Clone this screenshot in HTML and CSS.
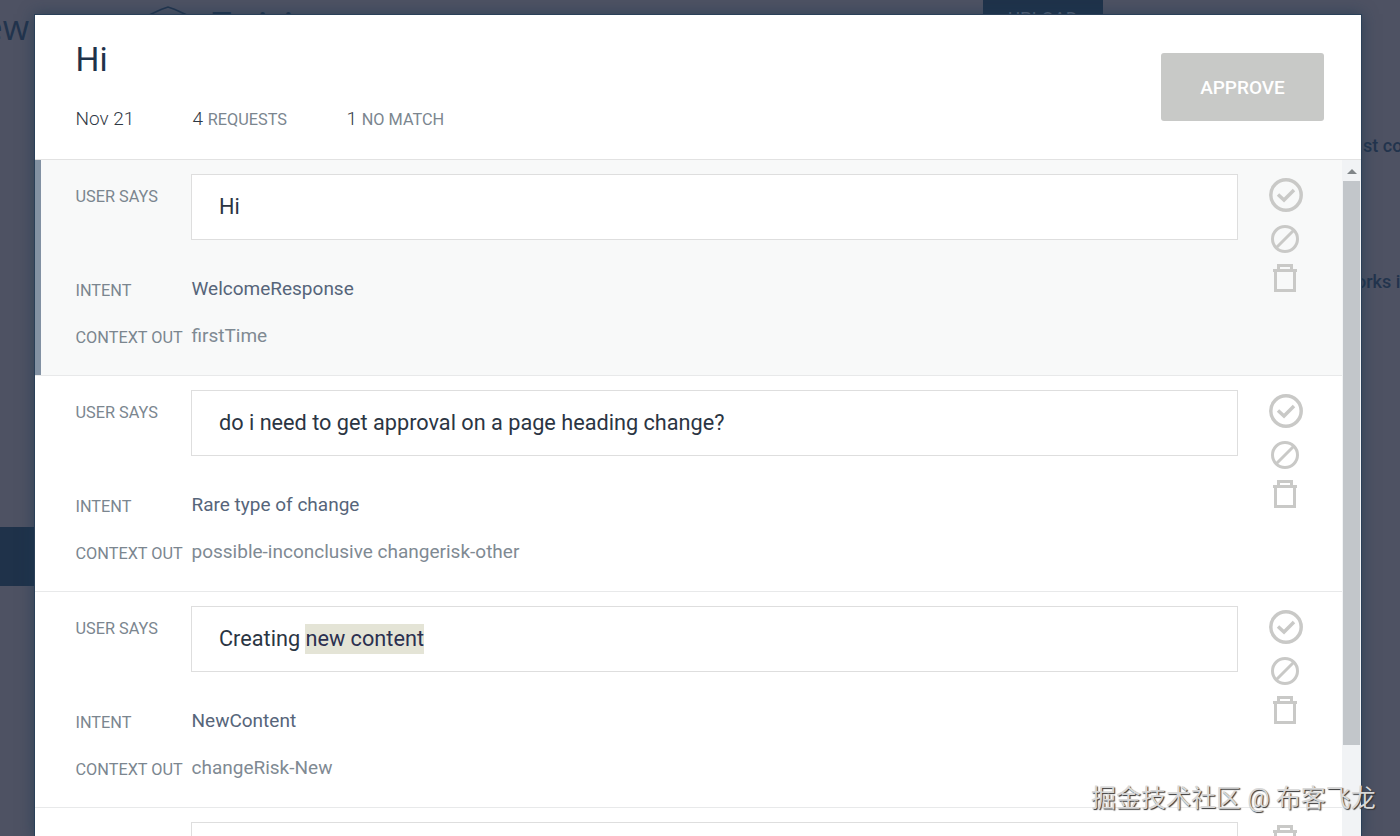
FILE: index.html
```html
<!DOCTYPE html>
<html lang="en">
<head>
    <meta charset="UTF-8">
    <meta name="viewport" content="width=device-width, initial-scale=1.0">
    <title>Training</title>
    <link rel="stylesheet" href="styles.css">
</head>
<body>
    <svg class="sprite" width="0" height="0">
        <symbol id="icon-check" viewBox="0 0 34 34">
            <circle cx="17" cy="17" r="15.2" />
            <path d="M9 16.500l6 5.500 10-10" />
        </symbol>
        <symbol id="icon-block" viewBox="0 0 28 28">
            <circle cx="14" cy="14" r="12.5" />
            <path d="M5.500 22.500L22.500 5.500" />
        </symbol>
        <symbol id="icon-trash" viewBox="0 0 26 30">
            <path d="M1 7.500h24M6.500 6.500V2.500h13v4M3.500 8v19.500h19V8" />
        </symbol>
    </svg>

    <!-- page behind the dialog -->
    <div class="page">
        <div class="page-logo">ew</div>
        <svg class="page-icon" width="48" height="24" viewBox="0 0 48 24">
            <path d="M3 16L17 9.500 24 7l7 2.500L45 16" />
        </svg>
        <div class="page-title">Training</div>
        <div class="page-upload">UPLOAD</div>
        <div class="page-active"></div>
        <div class="page-hint hint-top">st co</div>
        <div class="page-hint hint-bottom">orks i</div>
    </div>

    <div class="modal">
        <div class="modal-header">
            <div class="summary">
                <h1 class="title">Hi</h1>
                <div class="stats">
                    <span class="stat date">Nov 21</span>
                    <span class="stat requests">4 <small>REQUESTS</small></span>
                    <span class="stat">1 <small>NO MATCH</small></span>
                </div>
            </div>
            <button class="btn-approve">APPROVE</button>
        </div>

        <div class="modal-body">
            <div class="list">
                <div class="item active">
                    <div class="label">USER SAYS</div>
                    <div class="phrase"><span>Hi</span></div>
                    <div class="actions">
                        <svg class="icon check"><use href="#icon-check" /></svg>
                        <svg class="icon block"><use href="#icon-block" /></svg>
                        <svg class="icon trash"><use href="#icon-trash" /></svg>
                    </div>
                    <div class="label">INTENT</div>
                    <div class="value intent">WelcomeResponse</div>
                    <div class="label">CONTEXT OUT</div>
                    <div class="value">firstTime</div>
                </div>

                <div class="item">
                    <div class="label">USER SAYS</div>
                    <div class="phrase"><span>do i need to get approval on a page heading change?</span></div>
                    <div class="actions">
                        <svg class="icon check"><use href="#icon-check" /></svg>
                        <svg class="icon block"><use href="#icon-block" /></svg>
                        <svg class="icon trash"><use href="#icon-trash" /></svg>
                    </div>
                    <div class="label">INTENT</div>
                    <div class="value intent">Rare type of change</div>
                    <div class="label">CONTEXT OUT</div>
                    <div class="value">possible-inconclusive changerisk-other</div>
                </div>

                <div class="item">
                    <div class="label">USER SAYS</div>
                    <div class="phrase"><span>Creating <mark>new content</mark></span></div>
                    <div class="actions">
                        <svg class="icon check"><use href="#icon-check" /></svg>
                        <svg class="icon block"><use href="#icon-block" /></svg>
                        <svg class="icon trash"><use href="#icon-trash" /></svg>
                    </div>
                    <div class="label">INTENT</div>
                    <div class="value intent">NewContent</div>
                    <div class="label">CONTEXT OUT</div>
                    <div class="value">changeRisk-New</div>
                </div>

                <div class="item">
                    <div class="label"></div>
                    <div class="phrase"></div>
                    <div class="actions single">
                        <svg class="icon trash"><use href="#icon-trash" /></svg>
                    </div>
                </div>
            </div>
            <div class="scrollbar">
                <div class="scroll-arrow"></div>
                <div class="scroll-thumb"></div>
            </div>
        </div>
    </div>

    <div class="watermark">掘金技术社区 @ 布客飞龙</div>
</body>
</html>
```

FILE: styles.css
```css
* {
    box-sizing: border-box;
}

body {
    margin: 0;
    height: 836px;
    overflow: hidden;
    position: relative;
    background: #4e5263;
    font-family: Roboto, "Noto Sans CJK SC", sans-serif;
}

.sprite {
    position: absolute;
}

/* page behind the dialog */
.page {
    position: absolute;
    inset: 0;
    overflow: hidden;
    color: #22344d;
}

.page > * {
    position: absolute;
}

.page-logo {
    right: 1371px;
    top: 9px;
    font-family: "Open Sans", sans-serif;
    font-size: 34px;
    line-height: 36px;
    font-weight: 500;
}

.page-icon {
    left: 144px;
    top: 0;
    fill: none;
    stroke: #22344d;
    stroke-width: 1.5;
}

.page-title {
    left: 212px;
    top: 4px;
    font-size: 32px;
    line-height: 38px;
    font-weight: 500;
}

.page-upload {
    left: 983px;
    top: 0;
    width: 120px;
    height: 40px;
    padding-top: 8px;
    background: #1f324a;
    color: #59647a;
    font-size: 18.500px;
    text-align: center;
}

.page-active {
    left: 0;
    top: 527px;
    width: 40px;
    height: 59px;
    background: #1f324a;
}

.page-hint {
    font-size: 18px;
    line-height: 22px;
    font-weight: 500;
    white-space: nowrap;
}

.hint-top {
    left: 1363px;
    top: 135px;
}

.hint-bottom {
    left: 1356px;
    top: 271px;
}

/* dialog */
.modal {
    position: absolute;
    left: 35px;
    top: 15px;
    width: 1326px;
    height: 821px;
    overflow: hidden;
    background: #fff;
    box-shadow: 0 0 0 1px #2a4058, 0 0 14px 1px rgba(25, 55, 80, 0.6);
}

.modal-header {
    display: flex;
    justify-content: space-between;
    height: 145px;
    padding: 0 37px 0 40.500px;
    border-bottom: 1px solid #e2e2e2;
}

.title {
    margin: 25px 0 0;
    color: #1f324a;
    font-size: 33.500px;
    line-height: 40px;
    font-weight: 400;
}

.stats {
    display: flex;
    margin-top: 26px;
    color: #2f3844;
    font-size: 19px;
    line-height: 26px;
    font-weight: 300;
}

.stat small {
    color: #7b868f;
    font-size: 16.300px;
    font-weight: 400;
}

.date {
    width: 117px;
}

.requests {
    width: 154px;
}

.btn-approve {
    width: 163px;
    height: 68px;
    margin-top: 38px;
    padding: 0;
    border: none;
    border-radius: 3px;
    background: #c8c9c7;
    color: #fff;
    font-family: inherit;
    font-size: 19px;
    font-weight: 500;
}

.modal-body {
    display: flex;
    height: 676px;
}

.list {
    flex: 1;
    overflow: hidden;
}

.item {
    display: grid;
    grid-template-columns: 116px 1047px 94px;
    grid-template-rows: 94px 47px 47px;
    height: 216px;
    padding: 14px 0 0 40.500px;
    border-bottom: 1px solid #e8e9ea;
}

.item.active {
    background: #f8f9f9;
    box-shadow: inset 6px 0 #8291a3;
}

.label {
    padding-top: 11px;
    color: #7b868f;
    font-size: 16.300px;
    line-height: 23px;
    white-space: nowrap;
}

.phrase {
    display: flex;
    align-items: center;
    width: 1047px;
    height: 66px;
    margin-left: -0.500px;
    padding: 0 27px;
    border: 1px solid #dedede;
    background: #fff;
    color: #2b3543;
    font-size: 21.700px;
    line-height: 30px;
}

.phrase span {
    white-space: pre;
}

.phrase mark {
    display: inline-block;
    background: #e4e4d6;
    color: #2b3050;
}

.value {
    grid-column: 2 / 4;
    padding-top: 8px;
    color: #7f8a93;
    font-size: 19px;
    line-height: 26px;
}

.value.intent {
    color: #56657a;
}

.actions {
    display: flex;
    flex-direction: column;
    align-items: center;
    padding-top: 3.500px;
}

.actions.single {
    padding-top: 0;
}

.icon {
    flex: none;
    fill: none;
    stroke: #c9c9c7;
    stroke-width: 3;
}

.check {
    width: 34px;
    height: 34px;
    stroke-width: 3.500;
}

.block {
    width: 28px;
    height: 28px;
    margin: 13px 1px 0 0;
}

.trash {
    width: 26px;
    height: 30px;
    margin: 10px 1px 0 0;
}

.single .trash {
    margin-top: 2px;
}

.scrollbar {
    width: 19px;
    padding: 0 1px;
    background: #f1f3f5;
}

.scroll-arrow {
    height: 21px;
    padding-top: 9px;
}

.scroll-arrow::before {
    content: "";
    display: block;
    width: 0;
    margin: 0 auto;
    border: 5px solid transparent;
    border-top: none;
    border-bottom-color: #808588;
}

.scroll-thumb {
    height: 564px;
    background: #c2c6ca;
}

.watermark {
    position: absolute;
    left: 1091px;
    top: 781px;
    color: #d8d8d8;
    font-size: 25px;
    line-height: 36px;
    white-space: nowrap;
    text-shadow: 1px 1px 1px #333;
}
```
